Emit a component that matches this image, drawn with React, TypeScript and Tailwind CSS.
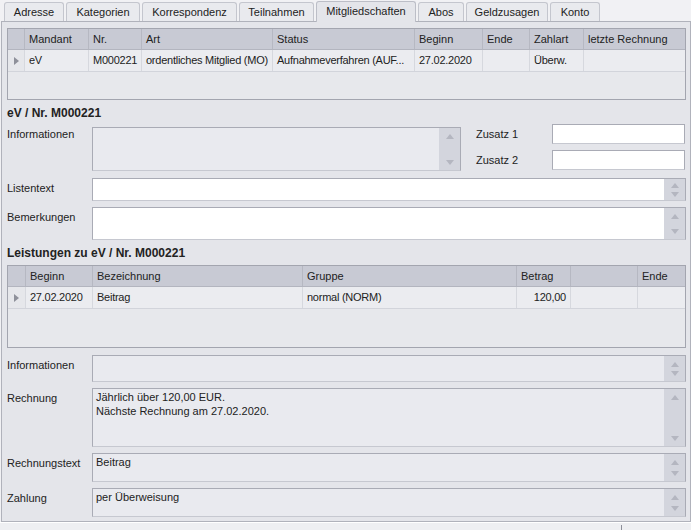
import React from "react";

const Up = () => (
  <svg width="8" height="5" viewBox="0 0 8 5">
    <polygon points="0,5 4,0 8,5" fill="#b4b6c0" />
  </svg>
);
const Down = () => (
  <svg width="8" height="5" viewBox="0 0 8 5">
    <polygon points="0,0 8,0 4,5" fill="#b4b6c0" />
  </svg>
);

const Scroll = ({ compact }: { compact?: boolean }) => (
  <div
    className={`w-[21px] bg-[#d3d5dd] flex flex-col justify-between items-center self-stretch ${
      compact ? "pt-[4px] pb-[3px]" : "pt-[6px] pb-[5px]"
    }`}
  >
    <Up />
    <Down />
  </div>
);

const Box = ({
  h,
  white,
  w,
  compact,
  children,
}: {
  h: string;
  white?: boolean;
  w: string;
  compact?: boolean;
  children?: React.ReactNode;
}) => (
  <div
    className={`flex ${h} ${w} border border-[#a9abb5] border-b-[#c6c8d0] ${
      white ? "bg-white" : "bg-[#e9eaef]"
    }`}
  >
    <div className="flex-1 px-[3px] pt-[1px] leading-[14px] whitespace-pre-line">{children}</div>
    <Scroll compact={compact} />
  </div>
);

const Label = ({ children }: { children: React.ReactNode }) => (
  <div className="w-[85px] shrink-0 pt-[4px] leading-[13px]">{children}</div>
);

const Row = ({
  label,
  h,
  white,
  compact,
  children,
}: {
  label: string;
  h: string;
  white?: boolean;
  compact?: boolean;
  children?: React.ReactNode;
}) => (
  <div className="flex">
    <Label>{label}</Label>
    <Box h={h} white={white} w="w-[594px]" compact={compact}>
      {children}
    </Box>
  </div>
);

const Indicator = () => (
  <svg width="5" height="8" viewBox="0 0 5 8">
    <polygon points="0,0 5,4 0,8" fill="#8e909a" />
  </svg>
);

type Col = { w: string; h: string; v?: string; right?: boolean; last?: boolean };

const Grid = ({ cols, h }: { cols: Col[]; h: string }) => (
  <div className={`w-[679px] ${h} border border-[#a3a5af] bg-[#e7e8ec] flex flex-col`}>
    <div className="flex h-[21px] bg-[#c8cad4] border-b border-[#b3b5bf]">
      {cols.map((c, i) => (
        <div
          key={i}
          className={`${c.w} ${c.last ? "" : "border-r border-[#b6b8c2]"} pl-[4px] leading-[20px] whitespace-nowrap overflow-hidden`}
        >
          {c.h}
        </div>
      ))}
    </div>
    <div className="flex h-[22px] bg-[#ebecf0] border-b border-[#d2d4db]">
      {cols.map((c, i) => (
        <div
          key={i}
          className={`${c.w} ${c.last ? "" : "border-r border-[#d6d8de]"} ${
            c.right ? "text-right pr-[4px]" : "pl-[4px]"
          } leading-[21px] tracking-[-0.25px] whitespace-nowrap overflow-hidden ${
            i === 0 ? "flex items-center pl-[6px] bg-[#e6e7eb]" : ""
          }`}
        >
          {i === 0 ? <Indicator /> : c.v}
        </div>
      ))}
    </div>
  </div>
);

const tabs: [string, string][] = [
  ["Adresse", "w-[60px]"],
  ["Kategorien", "w-[74px]"],
  ["Korrespondenz", "w-[95px]"],
  ["Teilnahmen", "w-[75px]"],
  ["Mitgliedschaften", "w-[100px]"],
  ["Abos", "w-[46px]"],
  ["Geldzusagen", "w-[82px]"],
  ["Konto", "w-[50px]"],
];

export default function App() {
  const grid1: Col[] = [
    { w: "w-[17px]", h: "" },
    { w: "w-[64px]", h: "Mandant", v: "eV" },
    { w: "w-[53px]", h: "Nr.", v: "M000221" },
    { w: "w-[131px]", h: "Art", v: "ordentliches Mitglied (MO)" },
    { w: "w-[142px]", h: "Status", v: "Aufnahmeverfahren (AUF..." },
    { w: "w-[68px]", h: "Beginn", v: "27.02.2020" },
    { w: "w-[47px]", h: "Ende", v: "" },
    { w: "w-[54px]", h: "Zahlart", v: "Überw." },
    { w: "flex-1", h: "letzte Rechnung", v: "", last: true },
  ];
  const grid2: Col[] = [
    { w: "w-[18px]", h: "" },
    { w: "w-[67px]", h: "Beginn", v: "27.02.2020" },
    { w: "w-[210px]", h: "Bezeichnung", v: "Beitrag" },
    { w: "w-[214px]", h: "Gruppe", v: "normal (NORM)" },
    { w: "w-[54px]", h: "Betrag", v: "120,00", right: true },
    { w: "w-[67px]", h: "", v: "" },
    { w: "flex-1", h: "Ende", v: "", last: true },
  ];
  return (
    <div className="w-[691px] h-[530px] overflow-hidden bg-[#f1f1f4] font-['Liberation_Sans',Arial,sans-serif] text-[11px] text-[#222222]">
      {/* tabs */}
      <div className="h-[21px] flex items-end pl-[4px] gap-[2px] relative z-10">
        {tabs.map(([t, w], i) =>
          i === 4 ? (
            <div
              key={t}
              className={`${w} h-[21px] mb-[-1px] border border-b-0 border-[#bcbec7] rounded-t-[3px] bg-[#e4e5ea] text-center leading-[19px]`}
            >
              {t}
            </div>
          ) : (
            <div
              key={t}
              className={`${w} h-[19px] border border-b-0 border-[#c4c6ce] rounded-t-[3px] bg-[#e9eaee] text-center leading-[18px]`}
            >
              {t}
            </div>
          )
        )}
      </div>
      {/* panel */}
      <div className="ml-[1px] w-[690px] h-[501px] border border-[#b0b2bb] bg-[#e4e5ea] pl-[5px] pt-[6px]">
        <Grid cols={grid1} h="h-[72px]" />
        <div className="h-[24px] pt-[7px] leading-[13px] font-bold text-[12px]">eV / Nr. M000221</div>
        <div className="flex h-[47px]">
          <Label>Informationen</Label>
          <div className="pt-[3px]">
            <Box h="h-[44px]" w="w-[369px]" />
          </div>
          <div className="ml-[15px] flex flex-col gap-[6px]">
            <div className="flex items-center h-[20px]">
              <div className="w-[76px]">Zusatz 1</div>
              <div className="w-[133px] h-[20px] bg-white border border-[#a9abb5] border-b-[#c6c8d0]" />
            </div>
            <div className="flex items-center h-[20px]">
              <div className="w-[76px]">Zusatz 2</div>
              <div className="w-[133px] h-[20px] bg-white border border-[#a9abb5] border-b-[#c6c8d0]" />
            </div>
          </div>
        </div>
        <div className="mt-[7px]">
          <Row label="Listentext" h="h-[23px]" white compact />
        </div>
        <div className="mt-[6px]">
          <Row label="Bemerkungen" h="h-[33px]" white />
        </div>
        <div className="h-[25px] pt-[7px] leading-[13px] font-bold text-[12px]">Leistungen zu eV / Nr. M000221</div>
        <Grid cols={grid2} h="h-[83px]" />
        <div className="mt-[7px]">
          <Row label="Informationen" h="h-[27px]" />
        </div>
        <div className="mt-[6px]">
          <Row label="Rechnung" h="h-[59px]">
            {"Jährlich über 120,00 EUR.\nNächste Rechnung am 27.02.2020."}
          </Row>
        </div>
        <div className="mt-[6px]">
          <Row label="Rechnungstext" h="h-[29px]">
            Beitrag
          </Row>
        </div>
        <div className="mt-[6px]">
          <Row label="Zahlung" h="h-[29px]">
            per Überweisung
          </Row>
        </div>
      </div>
      {/* status strip */}
      <div className="h-[8px] bg-[#eeeff2] border-t border-white flex">
        <div className="w-[621px]" />
        <div className="w-px h-full bg-[#8d8f99] mt-[2px]" />
      </div>
    </div>
  );
}
